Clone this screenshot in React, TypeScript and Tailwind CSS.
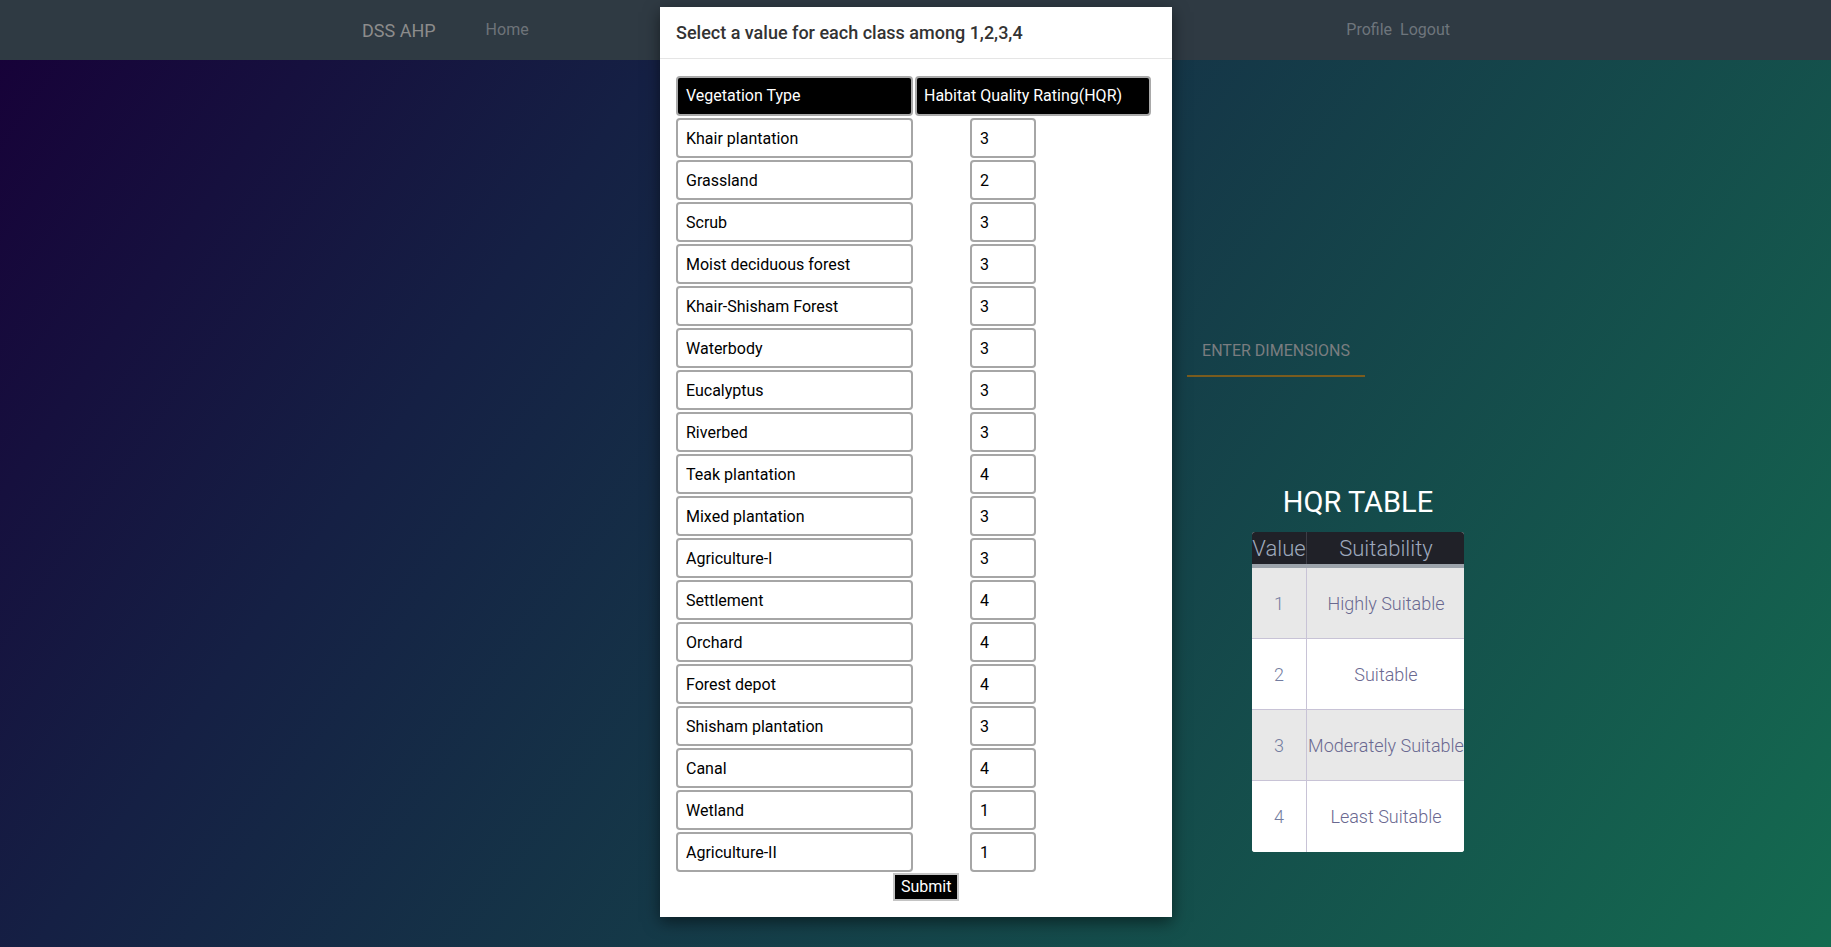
import { useState } from 'react';

const CLASSES: { name: string; value: string }[] = [
  { name: 'Khair plantation', value: '3' },
  { name: 'Grassland', value: '2' },
  { name: 'Scrub', value: '3' },
  { name: 'Moist deciduous forest', value: '3' },
  { name: 'Khair-Shisham Forest', value: '3' },
  { name: 'Waterbody', value: '3' },
  { name: 'Eucalyptus', value: '3' },
  { name: 'Riverbed', value: '3' },
  { name: 'Teak plantation', value: '4' },
  { name: 'Mixed plantation', value: '3' },
  { name: 'Agriculture-I', value: '3' },
  { name: 'Settlement', value: '4' },
  { name: 'Orchard', value: '4' },
  { name: 'Forest depot', value: '4' },
  { name: 'Shisham plantation', value: '3' },
  { name: 'Canal', value: '4' },
  { name: 'Wetland', value: '1' },
  { name: 'Agriculture-II', value: '1' },
];

const HQR = [
  { v: '1', s: 'Highly Suitable' },
  { v: '2', s: 'Suitable' },
  { v: '3', s: 'Moderately Suitable' },
  { v: '4', s: 'Least Suitable' },
];

function HqrModal() {
  const [values, setValues] = useState<string[]>(CLASSES.map(c => c.value));

  return (
    <div className="absolute left-[660px] top-[7px] w-[512px] bg-white shadow-[0_5px_15px_rgba(0,0,0,0.5)]">
      <div className="h-[52px] border-b border-[#e5e5e5] px-4 flex items-center">
        <h5 className="text-[18px] leading-6 font-medium text-[#333]">Select a value for each class among 1,2,3,4</h5>
      </div>

      <div className="px-4 pt-[17px] pb-[16px]">
        <div className="flex gap-[2px]">
          <div className="w-[237px] h-[40px] bg-black border-2 border-[#a9a9a9] rounded-[4px] pl-2 flex items-center text-white text-[16px]">
            Vegetation Type
          </div>
          <div className="w-[236px] h-[40px] bg-black border-2 border-[#a9a9a9] rounded-[4px] pl-[7px] flex items-center text-white text-[16px]">
            Habitat Quality Rating(HQR)
          </div>
        </div>

        {CLASSES.map((c, i) => (
          <div key={c.name} className="flex gap-[2px] mt-[2px]">
            <input
              readOnly
              value={c.name}
              className="w-[237px] h-[40px] border-2 border-[#a6a6a6] rounded-[4px] px-2 text-[16px] text-black outline-none"
            />
            <div className="w-[236px] pl-[55px]">
              <input
                value={values[i]}
                onChange={e => setValues(v => v.map((x, j) => (j === i ? e.target.value : x)))}
                className="w-[66px] h-[40px] border-2 border-[#a6a6a6] rounded-[4px] px-2 text-[16px] text-black outline-none"
              />
            </div>
          </div>
        ))}

        <div className="mt-[1px] pl-[217px]">
          <button className="h-[28px] px-[6px] bg-black text-white text-[16px] leading-5 border-2 border-[#c4c4c4]">
            Submit
          </button>
        </div>
      </div>
    </div>
  );
}

function HqrTable() {
  return (
    <div className="ml-[65px] w-[212px]">
      <h2 className="text-[29px] leading-9 text-white text-center mb-3">HQR TABLE</h2>
      <div className="w-[212px] overflow-hidden rounded-[3px] bg-white">
        <div className="flex h-[36px] bg-[#202128] border-b-4 border-[#9ca3ab] text-[22px] font-light text-[#9ea9bd]">
          <div className="w-[55px] shrink-0 border-r border-[#3d3e47] flex items-center justify-center">Value</div>
          <div className="w-[158px] shrink-0 flex items-center justify-center">Suitability</div>
        </div>
        {HQR.map((r, i) => (
          <div
            key={r.v}
            className={`flex h-[71px] text-[18px] font-light ${i % 2 === 0 ? 'bg-[#e8e8e8]' : 'bg-white'} ${i < 3 ? 'border-b border-[#c8c3d6]' : ''}`}
          >
            <div className="w-[55px] shrink-0 border-r border-[#c8c3d6] flex items-center justify-center text-[#737ca0]">{r.v}</div>
            <div className="w-[158px] shrink-0 flex items-center justify-center whitespace-nowrap text-[#6a6890]">{r.s}</div>
          </div>
        ))}
      </div>
    </div>
  );
}

export default function App() {
  return (
    <div className="relative w-full min-h-screen bg-[linear-gradient(125deg,#170038_0%,#152044_28%,#146b50_100%)] font-['Roboto',sans-serif]">
      <nav className="h-[60px] bg-[#2f3a43] flex items-center">
        <span className="pl-[362px] text-[18px] text-[#8c8c8c]">DSS AHP</span>
        <a className="ml-[50px] text-[16px] text-[#6e7379]">Home</a>
        <div className="ml-auto mr-[381px] flex gap-2 text-[16px] text-[#6e757c]">
          <a>Profile</a>
          <a>Logout</a>
        </div>
      </nav>

      <main className="pl-[1187px] pt-[281px] pb-[95px]">
        <div className="w-[178px] pb-[14px] border-b-2 border-[#7a5c1e] text-center text-[16px] leading-5 uppercase text-[#7a7d80]">
          Enter Dimensions
        </div>
        <div className="mt-[107px]">
          <HqrTable />
        </div>
      </main>

      <HqrModal />
    </div>
  );
}
